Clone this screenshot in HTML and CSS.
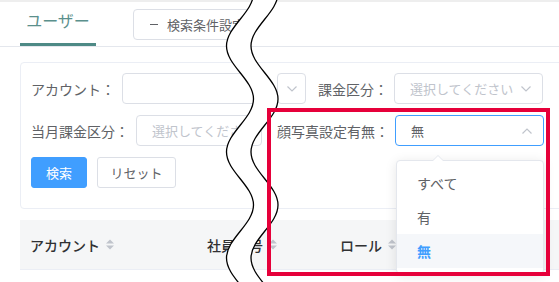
FILE: index.html
```html
<!DOCTYPE html>
<html lang="ja">
<head>
<meta charset="utf-8">
<title>ユーザー</title>
<link rel="stylesheet" href="styles.css">
</head>
<body>
<div class="page">
  <div class="topbar"></div>
  <header class="header">
    <div class="tab">ユーザー</div>
    <button class="cond"><span class="minus"></span>検索条件設定</button>
  </header>

  <section class="card">
    <div class="row">
      <span class="lbl">アカウント：</span>
      <div class="input w-acc"></div>
      <div class="input chev-box">
        <svg class="chev" width="10" height="6" viewBox="0 0 10 6"><polyline points="0.5,0.5 5,5 9.5,0.5"/></svg>
      </div>
      <span class="lbl lbl-r w-bill">課金区分：</span>
      <div class="input select"><span class="ph">選択してください</span>
        <svg class="chev" width="10" height="6" viewBox="0 0 10 6"><polyline points="0.5,0.5 5,5 9.5,0.5"/></svg>
      </div>
    </div>
    <div class="row">
      <span class="lbl">当月課金区分：</span>
      <div class="input w-month"><span class="ph">選択してください</span></div>
      <span class="lbl lbl-r w-photo">顔写真設定有無：</span>
      <div class="input select active"><span class="val">無</span>
        <svg class="chev" width="10" height="6" viewBox="0 0 10 6"><polyline points="0.5,5.5 5,1 9.5,5.5"/></svg>
      </div>
    </div>
    <div class="row">
      <button class="btn primary">検索</button>
      <button class="btn reset">リセット</button>
    </div>
  </section>

  <div class="thead">
    <div class="th c1">アカウント<svg class="sort" width="8" height="11" viewBox="0 0 8 11"><polygon points="0,4.5 4,0.5 8,4.5"/><polygon points="0,6.5 4,10.5 8,6.5"/></svg></div>
    <div class="th c2">社員番号<svg class="sort" width="8" height="11" viewBox="0 0 8 11"><polygon points="0,4.5 4,0.5 8,4.5"/><polygon points="0,6.5 4,10.5 8,6.5"/></svg></div>
    <div class="th c3">ロール<svg class="sort" width="8" height="11" viewBox="0 0 8 11"><polygon points="0,4.5 4,0.5 8,4.5"/><polygon points="0,6.5 4,10.5 8,6.5"/></svg></div>
  </div>

  <ul class="dropdown">
    <li>すべて</li>
    <li>有</li>
    <li class="selected">無</li>
  </ul>

  <svg class="tear" width="559" height="282" viewBox="0 0 559 282">
    <path class="gap" d="M253.5,-7 C253.5,12.3 226.5,26.7 226.5,46 C226.5,65.3 253.5,79.7 253.5,99 C253.5,118.3 226.5,132.7 226.5,152 C226.5,171.3 253.5,185.7 253.5,205 C253.5,224.3 226.5,238.7 226.5,258 C226.5,277.3 253.5,291.7 253.5,311 L278,311 C278,291.7 251,277.3 251,258 C251,238.7 278,224.3 278,205 C278,185.7 251,171.3 251,152 C251,132.7 278,118.3 278,99 C278,79.7 251,65.3 251,46 C251,26.7 278,12.3 278,-7 Z"/>
    <path class="edge" d="M253.5,-7 C253.5,12.3 226.5,26.7 226.5,46 C226.5,65.3 253.5,79.7 253.5,99 C253.5,118.3 226.5,132.7 226.5,152 C226.5,171.3 253.5,185.7 253.5,205 C253.5,224.3 226.5,238.7 226.5,258 C226.5,277.3 253.5,291.7 253.5,311"/>
    <path class="edge" d="M278,-7 C278,12.3 251,26.7 251,46 C251,65.3 278,79.7 278,99 C278,118.3 251,132.7 251,152 C251,171.3 278,185.7 278,205 C278,224.3 251,238.7 251,258 C251,277.3 278,291.7 278,311"/>
  </svg>

  <div class="highlight"></div>
</div>
</body>
</html>
```

FILE: styles.css
```css
* { box-sizing: border-box; }
html, body { margin: 0; padding: 0; }
body {
  font-family: "Noto Sans CJK JP", "Noto Sans", sans-serif;
  background: #fff;
}
.page {
  position: relative;
  width: 559px;
  height: 282px;
  overflow: hidden;
}
.topbar { height: 2px; background: #eeeeee; }

.header {
  display: flex;
  align-items: flex-start;
  height: 45px;
  padding-left: 20px;
  border-bottom: 1px solid #e4e7ed;
}
.tab {
  width: 76px;
  height: 44px;
  padding-top: 7px;
  line-height: 22px;
  font-size: 16px;
  text-align: center;
  color: #5b908c;
  border-bottom: 3px solid #4e8a86;
}
.cond {
  display: flex;
  align-items: center;
  margin: 7px 0 0 37px;
  width: 117px;
  height: 31px;
  padding: 0 0 0 16px;
  font: 13px "Noto Sans CJK JP", sans-serif;
  color: #606266;
  background: #fff;
  border: 1px solid #dcdfe6;
  border-radius: 4px;
  white-space: nowrap;
  overflow: hidden;
}
.minus {
  display: inline-block;
  width: 8px;
  height: 1px;
  background: #606266;
  margin-right: 9px;
}

.card {
  display: flex;
  flex-direction: column;
  gap: 11px;
  width: 620px;
  margin: 15px 0 0 20px;
  padding: 10px 0 20px 10px;
  border: 1px solid #ebeef5;
  border-radius: 4px;
}
.row {
  display: flex;
  align-items: center;
  height: 31px;
}
.lbl {
  font-size: 14px;
  color: #606266;
  margin-right: 7px;
  white-space: nowrap;
}
.lbl-r { text-align: right; margin-right: 6px; }
.w-bill { width: 82px; }
.w-photo { width: 112px; margin-left: 15px; }

.input {
  display: flex;
  align-items: center;
  height: 31px;
  padding: 0 15px;
  font-size: 13px;
  color: #606266;
  background: #fff;
  border: 1px solid #dcdfe6;
  border-radius: 4px;
  white-space: nowrap;
  overflow: hidden;
}
.w-acc { width: 143px; }
.w-month { width: 126px; }
.chev-box {
  width: 29px;
  margin-left: 12px;
  padding: 0;
  justify-content: center;
}
.select {
  width: 149px;
  justify-content: space-between;
  padding-right: 11px;
}
.active { border-color: #409eff; }
.ph { color: #c0c4cc; }
.val { color: #606266; }
.chev { flex: none; }
.chev polyline {
  fill: none;
  stroke: #c0c4cc;
  stroke-width: 1.2;
}

.btn {
  height: 31px;
  padding: 0;
  font: 13px "Noto Sans CJK JP", sans-serif;
  color: #606266;
  background: #fff;
  border: 1px solid #dcdfe6;
  border-radius: 3px;
}
.primary {
  width: 56px;
  color: #fff;
  background: #409eff;
  border-color: #409eff;
}
.reset { width: 79px; margin-left: 10px; }

.thead {
  display: flex;
  align-items: center;
  width: 620px;
  height: 50px;
  margin: 11px 0 0 20px;
  background: #f5f6f7;
  border-bottom: 1px solid #ebeef5;
}
.th {
  display: flex;
  align-items: center;
  padding-left: 10px;
  font-size: 14px;
  font-weight: 500;
  color: #303133;
  white-space: nowrap;
}
.c1 { width: 177px; }
.c2 { width: 133px; }
.c3 { width: 200px; }
.sort { margin-left: 6px; }
.sort polygon { fill: #c0c4cc; }

.dropdown {
  position: absolute;
  left: 396px;
  top: 160px;
  width: 148px;
  margin: 0;
  padding: 5px 0;
  list-style: none;
  background: #fff;
  border: 1px solid #e4e7ed;
  border-radius: 4px;
  box-shadow: 0 2px 12px rgba(0, 0, 0, 0.1);
}
.dropdown::before,
.dropdown::after {
  content: "";
  position: absolute;
  left: 35px;
  border: 6px solid transparent;
  border-top: 0;
}
.dropdown::before { top: -6px; border-bottom-color: #e4e7ed; }
.dropdown::after { top: -5px; border-bottom-color: #fff; }
.dropdown li {
  height: 34px;
  line-height: 34px;
  padding: 0 20px;
  font-size: 14px;
  color: #606266;
}
.dropdown .selected {
  color: #409eff;
  font-weight: 700;
  background: #f5f7fa;
}

.tear {
  position: absolute;
  left: 0;
  top: 0;
  pointer-events: none;
}
.tear .gap { fill: #fff; }
.tear .edge {
  fill: none;
  stroke: #000;
  stroke-width: 1.3;
}

.highlight {
  position: absolute;
  left: 267px;
  top: 108px;
  width: 283px;
  height: 168px;
  border: 4px solid #e6003a;
}
```
